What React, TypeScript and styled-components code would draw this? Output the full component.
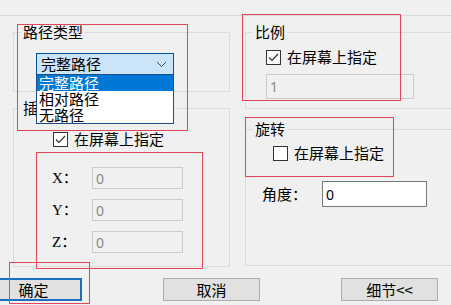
import React from 'react';
import styled, { createGlobalStyle } from 'styled-components';

const GlobalStyle = createGlobalStyle`
  html, body {
    margin: 0;
    padding: 0;
    background: #f0f0f0;
  }
  body {
    font-family: "Noto Sans CJK SC", "Noto Sans", sans-serif;
    color: #000;
  }
`;

const Dialog = styled.div`
  position: relative;
  width: 451px;
  height: 305px;
  overflow: hidden;
  background: #f0f0f0;
  font-size: 15px;
`;

const TopRule = styled.div`
  height: 15px;
  border-bottom: 1px solid #dadada;
`;

const Columns = styled.div`
  display: flex;
  gap: 15px;
  margin-top: 16px;
  padding-left: 13px;
`;

const Column = styled.div<{ $width: number; $gap: number }>`
  display: flex;
  flex-direction: column;
  flex: 0 0 auto;
  width: ${(p) => p.$width}px;
  gap: ${(p) => p.$gap}px;
`;

const Group = styled.div<{ $height: number }>`
  box-sizing: border-box;
  height: ${(p) => p.$height}px;
  border: 1px solid #dcdcdc;
  display: flex;
  flex-direction: column;
  align-items: flex-start;
`;

const Legend = styled.div`
  margin: -10px 0 0 7px;
  padding: 0 2px;
  line-height: 18px;
  height: 18px;
  background: #f0f0f0;
  white-space: nowrap;
`;

const ComboWrap = styled.div`
  position: relative;
  margin: 12px 0 0 22px;
`;

const Combo = styled.div`
  box-sizing: border-box;
  width: 138px;
  height: 22px;
  background: #cce4f7;
  border: 1px solid #005499;
  display: flex;
  align-items: center;
  justify-content: space-between;
  padding: 0 6px 0 4px;
  line-height: 18px;
`;

const DropList = styled.div`
  position: absolute;
  top: 21px;
  left: 0;
  z-index: 5;
  box-sizing: border-box;
  width: 138px;
  background: #fff;
  border: 1px solid #1b4f8c;
`;

const DropItem = styled.div<{ $selected?: boolean }>`
  height: 16px;
  line-height: 16px;
  padding-left: 2px;
  background: ${(p) => (p.$selected ? '#0078d7' : '#fff')};
  color: ${(p) => (p.$selected ? '#fff' : '#000')};
`;

const CheckRow = styled.label<{ $top: number; $left: number }>`
  display: flex;
  align-items: center;
  gap: 6px;
  height: 16px;
  line-height: 16px;
  margin: ${(p) => p.$top}px 0 0 ${(p) => p.$left}px;
  white-space: nowrap;
`;

const Box = styled.span`
  box-sizing: border-box;
  width: 15px;
  height: 15px;
  border: 1px solid #333;
  background: #fff;
  display: flex;
  align-items: center;
  justify-content: center;
`;

const FieldRow = styled.div<{ $top: number; $left: number }>`
  display: flex;
  align-items: center;
  margin: ${(p) => p.$top}px 0 0 ${(p) => p.$left}px;
`;

const AxisLabel = styled.span`
  width: 40px;
  font-family: "Liberation Serif", "Noto Sans CJK SC", serif;
  font-size: 15px;
  line-height: 16px;
`;

const FieldLabel = styled.span<{ $width: number }>`
  width: ${(p) => p.$width}px;
  line-height: 16px;
  white-space: nowrap;
`;

const Field = styled.div<{ $width: number; $height: number; $disabled?: boolean }>`
  box-sizing: border-box;
  width: ${(p) => p.$width}px;
  height: ${(p) => p.$height}px;
  border: 1px solid ${(p) => (p.$disabled ? '#cccccc' : '#7a7a7a')};
  background: ${(p) => (p.$disabled ? '#f0f0f0' : '#fff')};
  color: ${(p) => (p.$disabled ? '#8a8a8a' : '#000')};
  font-family: "Noto Sans", "Noto Sans CJK SC", sans-serif;
  font-size: 14px;
  display: flex;
  align-items: center;
  padding-left: 3px;
`;

const ButtonRow = styled.div`
  display: flex;
  gap: 81px;
  margin: 11px 0 0 -15px;
`;

const Button = styled.div<{ $primary?: boolean }>`
  box-sizing: border-box;
  width: 97px;
  height: 23px;
  background: #e1e1e1;
  border: ${(p) => (p.$primary ? '2px solid #1e6ec2' : '1px solid #adadad')};
  display: flex;
  align-items: center;
  justify-content: center;
  line-height: 18px;
`;

const Mark = styled.div<{ $x: number; $y: number; $w: number; $h: number }>`
  position: absolute;
  left: ${(p) => p.$x}px;
  top: ${(p) => p.$y}px;
  width: ${(p) => p.$w}px;
  height: ${(p) => p.$h}px;
  box-sizing: border-box;
  border: 1px solid #e0485a;
  z-index: 10;
  pointer-events: none;
`;

const Chevron = () => (
  <svg width="11" height="7" viewBox="0 0 11 7">
    <polyline points="1,1 5.5,5.5 10,1" fill="none" stroke="#4a4a4a" strokeWidth="1" />
  </svg>
);

const Check = ({ checked }: { checked?: boolean }) => (
  <Box>
    {checked && (
      <svg width="11" height="9" viewBox="0 0 11 9">
        <polyline points="1,4.5 4,7.5 10,1" fill="none" stroke="#333" strokeWidth="1.2" />
      </svg>
    )}
  </Box>
);

export default function App() {
  return (
    <Dialog>
      <GlobalStyle />
      <TopRule />
      <Columns>
        <Column $width={217} $gap={16}>
          <Group $height={60}>
            <Legend>路径类型</Legend>
            <ComboWrap>
              <Combo>
                <span>完整路径</span>
                <Chevron />
              </Combo>
              <DropList>
                <DropItem $selected>完整路径</DropItem>
                <DropItem>相对路径</DropItem>
                <DropItem>无路径</DropItem>
              </DropList>
            </ComboWrap>
          </Group>
          <Group $height={159}>
            <Legend>插入点</Legend>
            <CheckRow $top={14} $left={39}>
              <Check checked />
              在屏幕上指定
            </CheckRow>
            <FieldRow $top={20} $left={38}>
              <AxisLabel>X：</AxisLabel>
              <Field $width={91} $height={22} $disabled>0</Field>
            </FieldRow>
            <FieldRow $top={10} $left={38}>
              <AxisLabel>Y：</AxisLabel>
              <Field $width={91} $height={22} $disabled>0</Field>
            </FieldRow>
            <FieldRow $top={10} $left={38}>
              <AxisLabel>Z：</AxisLabel>
              <Field $width={91} $height={22} $disabled>0</Field>
            </FieldRow>
          </Group>
        </Column>
        <Column $width={240} $gap={20}>
          <Group $height={77}>
            <Legend>比例</Legend>
            <CheckRow $top={8} $left={20}>
              <Check checked />
              在屏幕上指定
            </CheckRow>
            <FieldRow $top={9} $left={20}>
              <Field $width={148} $height={25} $disabled>1</Field>
            </FieldRow>
          </Group>
          <Group $height={137}>
            <Legend>旋转</Legend>
            <CheckRow $top={7} $left={27}>
              <Check />
              在屏幕上指定
            </CheckRow>
            <FieldRow $top={20} $left={16}>
              <FieldLabel $width={60}>角度：</FieldLabel>
              <Field $width={105} $height={26}>0</Field>
            </FieldRow>
          </Group>
        </Column>
      </Columns>
      <ButtonRow>
        <Button $primary>确定</Button>
        <Button>取消</Button>
        <Button>细节&lt;&lt;</Button>
      </ButtonRow>

      <Mark $x={17} $y={24} $w={171} $h={107} />
      <Mark $x={36} $y={152} $w={167} $h={117} />
      <Mark $x={9} $y={262} $w={81} $h={42} />
      <Mark $x={242} $y={14} $w={159} $h={87} />
      <Mark $x={245} $y={117} $w={149} $h={60} />
    </Dialog>
  );
}
